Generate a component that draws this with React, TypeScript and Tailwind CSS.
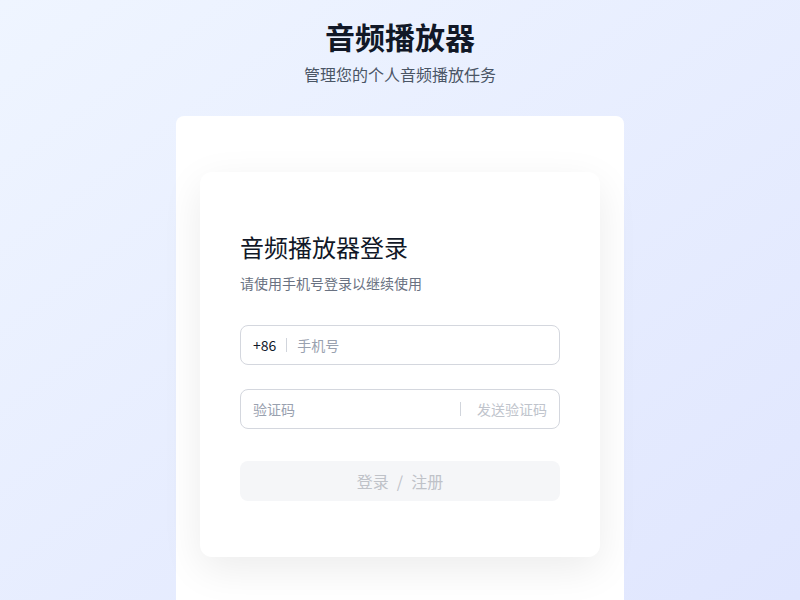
import React, { useState } from 'react';

export default function App() {
  const [phone, setPhone] = useState('');
  const [code, setCode] = useState('');
  const disabled = !phone || !code;

  return (
    <div
      className="min-h-screen h-[600px] overflow-hidden bg-gradient-to-br from-[#eff5ff] to-[#e0e6fe] text-gray-900"
      style={{ fontFamily: '"Noto Sans CJK SC", "Noto Sans", sans-serif' }}
    >
      {/* 页头 */}
      <header className="flex flex-col items-center pt-[18px]">
        <h1 className="text-3xl font-bold leading-9 text-[#111827]">音频播放器</h1>
        <p className="mt-2 text-base leading-6 text-gray-600">管理您的个人音频播放任务</p>
      </header>

      {/* 外层容器 */}
      <main className="mx-auto mt-[30px] w-[448px] rounded-lg bg-white px-6 pt-14 pb-20">
        <div className="rounded-xl bg-white px-10 pt-[59px] pb-14 shadow-[0_12px_40px_rgba(0,0,0,0.08)]">
          <h2 className="text-2xl leading-8 font-normal text-[#111827]">音频播放器登录</h2>
          <p className="mt-2.5 text-sm leading-5 text-gray-500">请使用手机号登录以继续使用</p>

          {/* 手机号 */}
          <div className="mt-8 flex h-10 items-center rounded-lg border border-[#d4d7de] px-3">
            <span className="text-sm text-gray-900">+86</span>
            <span className="mx-2.5 h-3.5 w-px bg-gray-300" />
            <input
              value={phone}
              onChange={(e) => setPhone(e.target.value)}
              placeholder="手机号"
              className="flex-1 bg-transparent text-sm outline-none placeholder:text-gray-400"
            />
          </div>

          {/* 验证码 */}
          <div className="mt-6 flex h-10 items-center rounded-lg border border-[#d4d7de] px-3">
            <input
              value={code}
              onChange={(e) => setCode(e.target.value)}
              placeholder="验证码"
              className="min-w-0 flex-1 bg-transparent text-sm outline-none placeholder:text-gray-400"
            />
            <span className="mr-4 h-3.5 w-px bg-gray-300" />
            <button className="text-sm text-[#c0c4cc]">发送验证码</button>
          </div>

          <button
            disabled={disabled}
            className="mt-8 flex h-10 w-full items-center justify-center rounded-lg bg-[#f5f6f8] text-base text-[#bfc2c8]"
          >
            登录<span className="mx-2">/</span>注册
          </button>
        </div>
      </main>
    </div>
  );
}
